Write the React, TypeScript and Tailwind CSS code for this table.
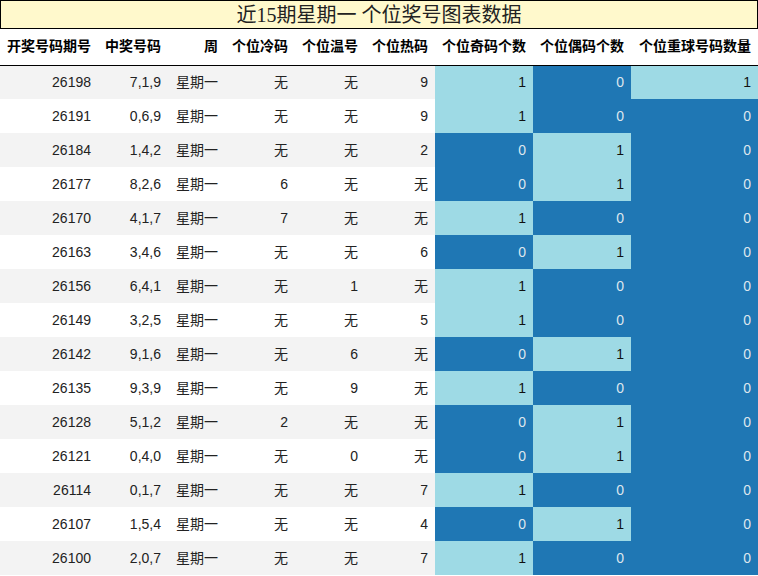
const rows: [string, string, string, string, string, number, number, number][] = [
  ["26198", "7,1,9", "无", "无", "9", 1, 0, 1],
  ["26191", "0,6,9", "无", "无", "9", 1, 0, 0],
  ["26184", "1,4,2", "无", "无", "2", 0, 1, 0],
  ["26177", "8,2,6", "6", "无", "无", 0, 1, 0],
  ["26170", "4,1,7", "7", "无", "无", 1, 0, 0],
  ["26163", "3,4,6", "无", "无", "6", 0, 1, 0],
  ["26156", "6,4,1", "无", "1", "无", 1, 0, 0],
  ["26149", "3,2,5", "无", "无", "5", 1, 0, 0],
  ["26142", "9,1,6", "无", "6", "无", 0, 1, 0],
  ["26135", "9,3,9", "无", "9", "无", 1, 0, 0],
  ["26128", "5,1,2", "2", "无", "无", 0, 1, 0],
  ["26121", "0,4,0", "无", "0", "无", 0, 1, 0],
  ["26114", "0,1,7", "无", "无", "7", 1, 0, 0],
  ["26107", "1,5,4", "无", "无", "4", 0, 1, 0],
  ["26100", "2,0,7", "无", "无", "7", 1, 0, 0],
];

const headers = ["开奖号码期号", "中奖号码", "周", "个位冷码", "个位温号", "个位热码", "个位奇码个数", "个位偶码个数", "个位重球号码数量"];
const widths = ["w-[98px]", "w-[70px]", "w-[57px]", "w-[70px]", "w-[70px]", "w-[70px]", "w-[98px]", "w-[98px]", "w-[127px]"];

function HeatCell({ v }: { v: number }) {
  return (
    <td className={`pr-[7px] text-right ${v === 1 ? "bg-[#9edae5] text-[#111]" : "bg-[#1f77b4] text-[#dde6ee]"}`}>
      {v}
    </td>
  );
}

export default function App() {
  return (
    <div className="w-[758px] h-[576px] bg-white overflow-hidden font-['Liberation_Sans','Noto_Sans_CJK_SC',sans-serif] text-[#222]">
      <div className="h-[29px] border border-black bg-[#fff9cc] flex items-center justify-center text-[20px] leading-none font-['Liberation_Serif','Noto_Sans_CJK_SC',serif] text-[#222]">
        近15期星期一 个位奖号图表数据
      </div>
      <table className="table-fixed border-collapse w-[758px] text-[14px]">
        <thead>
          <tr className="h-[36px] border-b border-black">
            {headers.map((h, i) => (
              <th key={h} className={`${widths[i]} pr-[7px] text-right font-bold text-black`}>
                {h}
              </th>
            ))}
          </tr>
        </thead>
        <tbody>
          {rows.map((r, i) => (
            <tr key={r[0]} className={`h-[34px] ${i % 2 === 0 ? "bg-[#f3f3f3]" : "bg-white"}`}>
              <td className="pr-[7px] text-right">{r[0]}</td>
              <td className="pr-[7px] text-right">{r[1]}</td>
              <td className="pr-[7px] text-right">星期一</td>
              <td className="pr-[7px] text-right">{r[2]}</td>
              <td className="pr-[7px] text-right">{r[3]}</td>
              <td className="pr-[7px] text-right">{r[4]}</td>
              <HeatCell v={r[5]} />
              <HeatCell v={r[6]} />
              <HeatCell v={r[7]} />
            </tr>
          ))}
        </tbody>
      </table>
    </div>
  );
}
